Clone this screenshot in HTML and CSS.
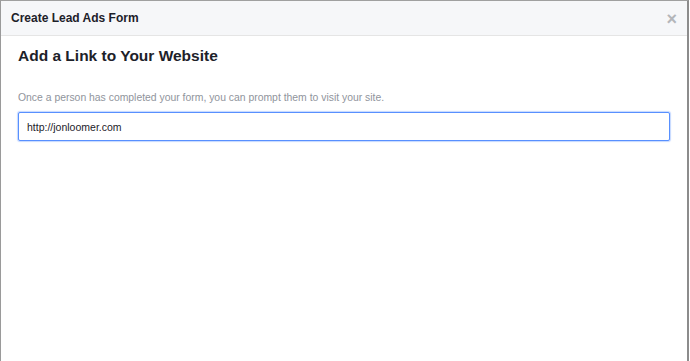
FILE: index.html
```html
<!DOCTYPE html>
<html lang="en">
<head>
    <meta charset="UTF-8">
    <title>Create Lead Ads Form</title>
    <link rel="stylesheet" href="styles.css">
</head>
<body>
    <div class="dialog">
        <div class="dialog-header">
            <span class="dialog-title">Create Lead Ads Form</span>
            <span class="close">&times;</span>
        </div>
        <div class="dialog-body">
            <h2>Add a Link to Your Website</h2>
            <p class="hint">Once a person has completed your form, you can prompt them to visit your site.</p>
            <input class="url-input" type="text" value="http://jonloomer.com">
        </div>
    </div>
</body>
</html>
```

FILE: styles.css
```css
body {
    margin: 0;
    background: #fff;
    font-family: 'Liberation Sans', Arial, sans-serif;
}

.dialog {
    width: 686px;
    height: 360px;
    border-top: 1px solid #a0a0a0;
    border-left: 1px solid #9a9a9a;
    border-right: 2px solid #8c8c8c;
    background: #fff;
}

.dialog-header {
    height: 34px;
    display: flex;
    align-items: center;
    justify-content: space-between;
    padding: 0 10px 0 10px;
    background: #f6f7f9;
    border-bottom: 1px solid #e5e5e5;
}

.dialog-title {
    font-size: 12px;
    font-weight: bold;
    color: #1d2129;
}

.close {
    font-size: 18px;
    line-height: 18px;
    margin-top: 2px;
    color: #b4b6ba;
    font-weight: bold;
}

.dialog-body {
    padding: 10px 17px 0 17px;
}

h2 {
    margin: 0;
    font-size: 15.5px;
    line-height: 19px;
    font-weight: bold;
    color: #1d2129;
}

.hint {
    margin: 26px 0 0;
    font-size: 10.4px;
    line-height: 13px;
    color: #90949c;
}

.url-input {
    display: block;
    box-sizing: border-box;
    width: 652px;
    height: 29px;
    margin-top: 8px;
    padding: 0 8px;
    border: 1px solid #5890ff;
    border-radius: 2px;
    box-shadow: 0 0 1px 1px rgba(88, 144, 255, 0.35);
    font-family: inherit;
    font-size: 10.5px;
    color: #1d2129;
    outline: none;
}
```
